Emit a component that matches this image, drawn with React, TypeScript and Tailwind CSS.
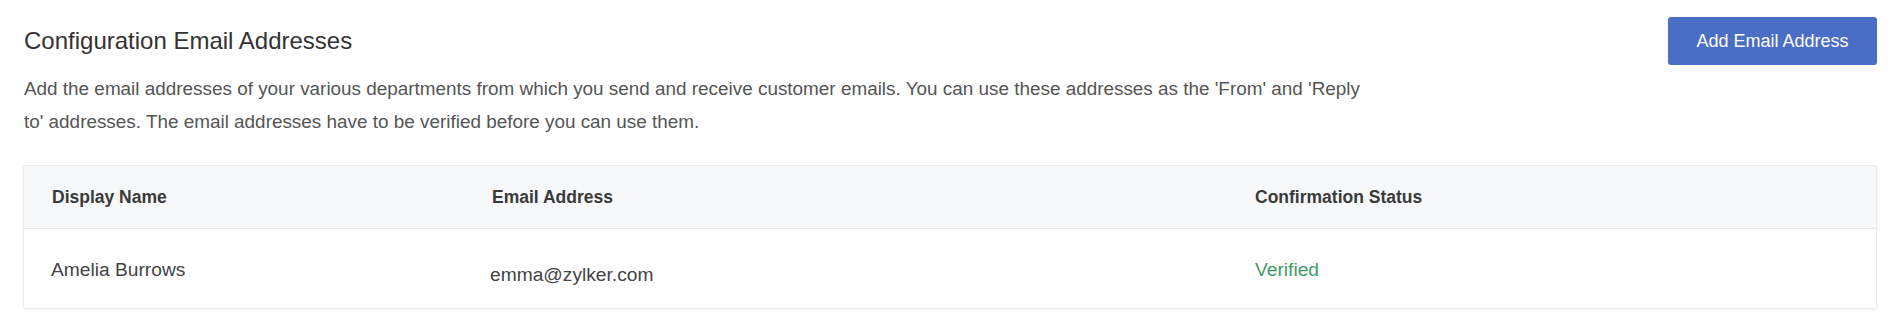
const columns = ["Display Name", "Email Address", "Confirmation Status"];

const rows = [
  { name: "Amelia Burrows", email: "emma@zylker.com", status: "Verified" },
];

export default function App() {
  return (
    <div className="min-h-screen bg-white pl-[23px] pr-[20px] pt-[17px] font-['Liberation_Sans',Arial,sans-serif]">
      {/* Header */}
      <div className="flex items-center justify-between">
        <h1 className="pl-px text-[24px] leading-[28px] text-[#333]">Configuration Email Addresses</h1>
        <button className="h-[48px] w-[209px] rounded-[3px] bg-[#4a6dc5] text-[18px] text-white">
          Add Email Address
        </button>
      </div>

      <p className="mt-[7px] max-w-[1350px] pl-px text-[18.9px] leading-[33px] text-[#555]">
        Add the email addresses of your various departments from which you send and receive customer emails. You can use these addresses as the 'From' and 'Reply to' addresses. The email addresses have to be verified before you can use them.
      </p>

      {/* Table */}
      <div className="mt-[27px] rounded-[2px] border border-[#ebebeb] shadow-[0_1px_3px_rgba(0,0,0,0.05)]">
        <div className="grid h-[63px] grid-cols-[440px_763px_1fr] items-center border-b border-[#e6e7e9] bg-[#f7f8f9]">
          {columns.map((c) => (
            <div key={c} className="pl-[28px] text-[17.5px] font-bold text-[#3a3a3a]">
              {c}
            </div>
          ))}
        </div>
        {rows.map((r) => (
          <div key={r.email} className="grid h-[79px] grid-cols-[440px_763px_1fr] items-center pt-[3px] text-[19.2px] text-[#444]">
            <div className="pl-[27px]">{r.name}</div>
            <div className="pl-[26px] pt-[10px]">{r.email}</div>
            <div className="pl-[28px] text-[#3f9b66]">{r.status}</div>
          </div>
        ))}
      </div>
    </div>
  );
}
